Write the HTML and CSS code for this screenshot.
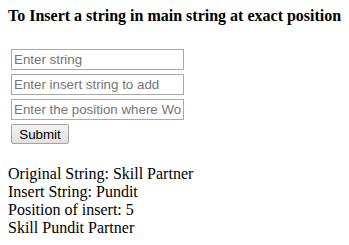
FILE: index.html
```html
<!DOCTYPE html>
<html>
<head>
<meta charset="utf-8">
<link rel="stylesheet" href="styles.css">
</head>
<body>
<h4 class="title">To Insert a string in main string at exact position</h4>
<form class="form">
  <input class="field" type="text" placeholder="Enter string">
  <input class="field" type="text" placeholder="Enter insert string to add">
  <input class="field" type="text" placeholder="Enter the position where Word to be inserted">
  <button class="btn" type="button">Submit</button>
</form>
<div class="output">
  <div class="line">Original String: Skill Partner</div>
  <div class="line">Insert String: Pundit</div>
  <div class="line">Position of insert: 5</div>
  <div class="line">Skill Pundit Partner</div>
</div>
</body>
</html>
```

FILE: styles.css
```css
html, body {
  background: #ffffff;
}
body {
  margin: 7px 8px 8px 8px;
  font-family: "Liberation Serif", "Times New Roman", serif;
  font-size: 16px;
  color: #000000;
}
.title {
  margin: 0 0 24px 0;
  font-size: 16px;
  font-weight: bold;
  line-height: 18px;
  white-space: nowrap;
}
.form {
  display: flex;
  flex-direction: column;
  align-items: flex-start;
  gap: 4px;
  margin: 0 0 21px 3px;
}
.field {
  box-sizing: border-box;
  width: 173px;
  height: 21px;
  margin: 0;
  padding: 1px 2px 1px 2px;
  border: 1px solid #a9a9a9;
  font-family: "Liberation Sans", Arial, sans-serif;
  font-size: 13.33px;
  color: #000;
  background: #fff;
  outline: none;
}
.field::placeholder {
  color: #757575;
  opacity: 1;
}
.btn {
  box-sizing: border-box;
  width: 58px;
  height: 20px;
  margin: 0;
  padding: 0;
  border: 1px solid #a3a3a3;
  border-radius: 2px;
  background: linear-gradient(#f2f2f2, #e1e1e1);
  font-family: "Liberation Sans", Arial, sans-serif;
  font-size: 13.33px;
  color: #000;
}
.line {
  line-height: 18px;
}
```
